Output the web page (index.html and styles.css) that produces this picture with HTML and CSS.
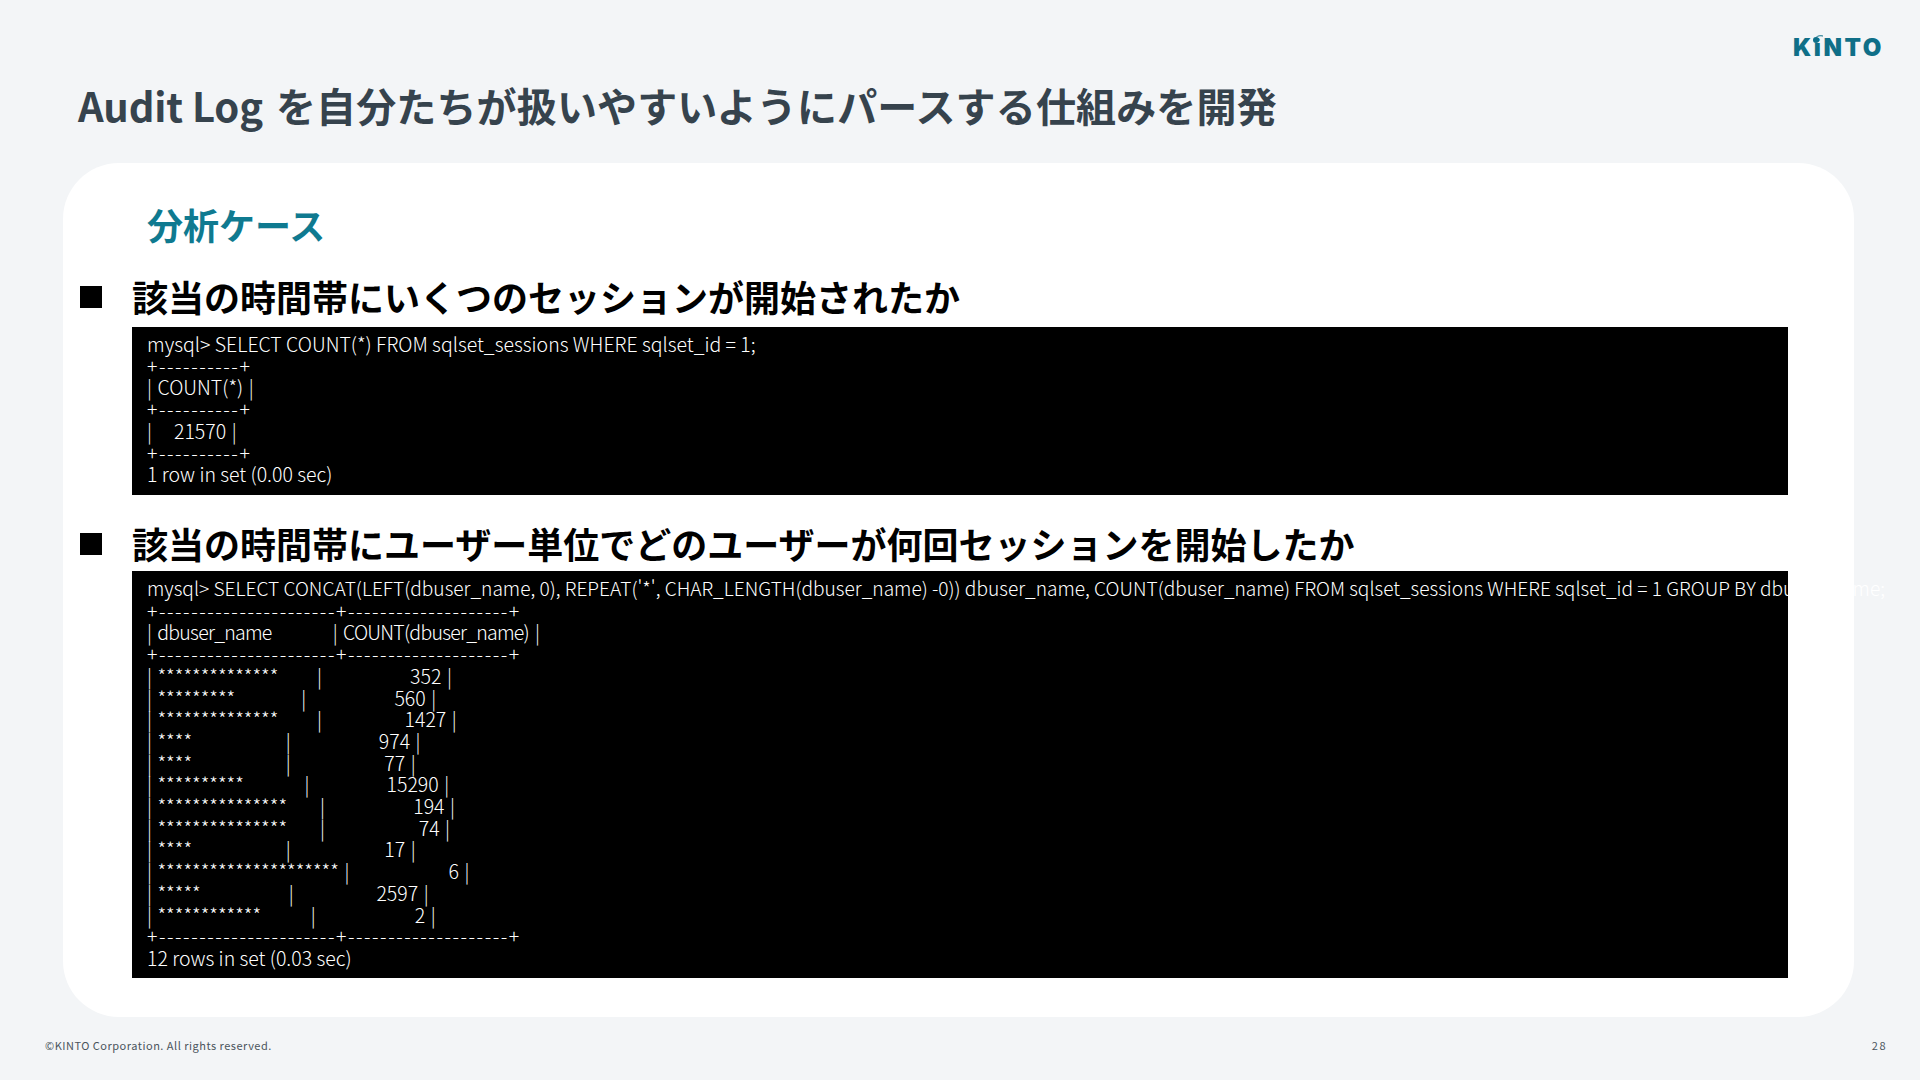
FILE: index.html
```html
<!DOCTYPE html>
<html lang="ja">
<head>
<meta charset="utf-8">
<title>Audit Log</title>
<link rel="stylesheet" href="styles.css">
</head>
<body>
<div class="slide">
  <header class="top">
    <h1 class="title">Audit Log <span class="title-ja">を自分たちが扱いやすいようにパースする仕組みを開発</span></h1>
    <div class="logo"><span class="logo-text">KiNTO</span><svg class="logo-dot" viewBox="0 0 14 10" width="14" height="10"><circle cx="6" cy="6" r="3" fill="#0f6f88"/><path d="M6 3.5 C8 1.5 10 1.5 13 2" stroke="#0f6f88" stroke-width="1" fill="none"/></svg></div>
  </header>
  <main class="card">
    <h2 class="section">分析ケース</h2>
    <div class="item">
      <span class="bullet"></span>
      <h3 class="heading">該当の時間帯にいくつのセッションが開始されたか</h3>
    </div>
    <pre class="code code-a"><span class="cmd-a">mysql&gt; SELECT COUNT(*) FROM sqlset_sessions WHERE sqlset_id = 1;</span>
<span class="rule">+----------+</span>
<span class="row">| COUNT(*) |</span>
<span class="rule">+----------+</span>
<span class="row">|    21570 |</span>
<span class="rule">+----------+</span>
1 row in set (0.00 sec)</pre>
    <div class="item item-b">
      <span class="bullet"></span>
      <h3 class="heading">該当の時間帯にユーザー単位でどのユーザーが何回セッションを開始したか</h3>
    </div>
    <pre class="code code-b"><span class="cmd-b">mysql&gt; SELECT CONCAT(LEFT(dbuser_name, 0), REPEAT('*', CHAR_LENGTH(dbuser_name) -0)) dbuser_name, COUNT(dbuser_name) FROM sqlset_sessions WHERE sqlset_id = 1 GROUP BY dbuser_name;</span>
<span class="rule">+----------------------+--------------------+</span>
<span class="row-head">| dbuser_name          | COUNT(dbuser_name) |</span>
<span class="rule">+----------------------+--------------------+</span>
<span class="row">| **************       |                352 |</span>
<span class="row">| *********            |                560 |</span>
<span class="row">| **************       |               1427 |</span>
<span class="row">| ****                 |                974 |</span>
<span class="row">| ****                 |                 77 |</span>
<span class="row">| **********           |              15290 |</span>
<span class="row">| ***************      |                194 |</span>
<span class="row">| ***************      |                 74 |</span>
<span class="row">| ****                 |                 17 |</span>
<span class="row">| ********************* |                  6 |</span>
<span class="row">| *****                |               2597 |</span>
<span class="row">| ************         |                  2 |</span>
<span class="rule">+----------------------+--------------------+</span>
12 rows in set (0.03 sec)</pre>
  </main>
  <footer class="foot">
    <span class="copy">©KINTO Corporation. All rights reserved.</span>
    <span class="page">28</span>
  </footer>
</div>
</body>
</html>
```
FILE: styles.css
```css
* { box-sizing: border-box; }
html, body { margin: 0; padding: 0; }
body { font-family: "Noto Sans CJK JP", "Noto Sans", sans-serif; }
.slide { width: 1920px; height: 1080px; background: #f3f5f7; overflow: hidden; display: flex; flex-direction: column; }
.top { height: 163px; display: flex; justify-content: space-between; padding: 0 36px 0 78px; }
.title { margin: 76px 0 0; font-size: 40px; line-height: 58px; height: 58px; font-weight: 700; color: #36434d; white-space: nowrap; letter-spacing: -0.15px; }
.title-ja { margin-left: 4px; letter-spacing: 0.15px; }
.logo { position: relative; margin-top: 33px; height: 30px; }
.logo-text { font-family: "Inter", sans-serif; font-weight: 900; font-size: 24px; line-height: 30px; letter-spacing: 2.6px; color: #0f6f88; }
.logo-dot { position: absolute; left: 17px; top: 1px; }
.card { width: 1791px; height: 854px; margin-left: 63px; background: #fff; border-radius: 56px; padding: 32px 66px 0 69px; }
.section { margin: 0 0 0 15px; font-size: 36px; line-height: 58px; font-weight: 700; color: #0f7a90; }
.item { display: flex; align-items: center; height: 57px; padding-bottom: 5px; margin-top: 17px; margin-left: -52px; }
.item-b { margin-top: 22px; height: 54px; padding-bottom: 2px; }
.bullet { width: 22px; height: 22px; background: #000; margin: 2px 30px 0 0; flex: none; }
.heading { margin: 0; font-size: 36px; line-height: 52px; font-weight: 700; color: #000; white-space: nowrap; }
.code { margin: 0; background: #000; color: #fff; font-family: "Noto Sans CJK JP", sans-serif; font-weight: 300; font-size: 19.5px; line-height: 21.7px; padding: 6px 15px; white-space: pre; }
.code-a { height: 168px; }
.code-b { height: 407px; }
.cmd-b { font-size: 19.15px; }
.rule { letter-spacing: 1.55px; }
.row { word-spacing: 1.2px; }
.row-head { letter-spacing: -0.75px; word-spacing: 2.55px; }
.foot { display: flex; justify-content: space-between; align-items: center; padding: 20px 33px 0 45px; font-size: 11px; color: #4a545c; }
.copy { letter-spacing: 0.5px; }
.page { letter-spacing: 1.5px; }
```
